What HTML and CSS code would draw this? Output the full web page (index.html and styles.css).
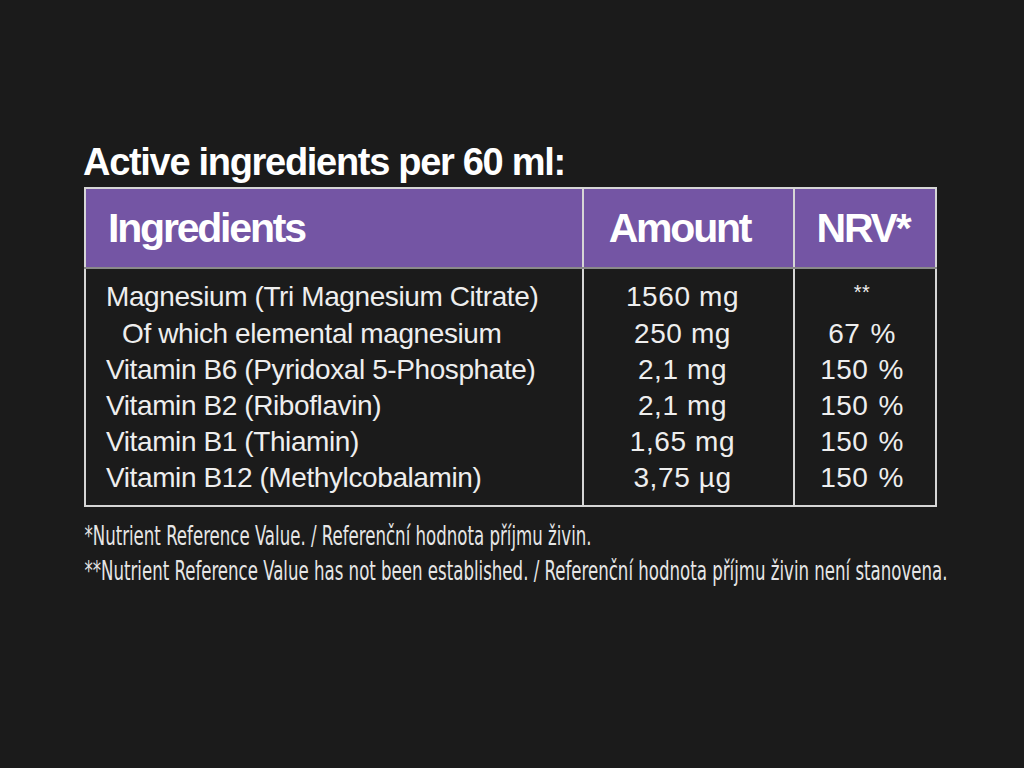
FILE: index.html
```html
<!DOCTYPE html>
<html>
<head>
<meta charset="utf-8">
<link rel="stylesheet" href="styles.css">
</head>
<body>
<main class="panel">
  <h1 class="title">Active ingredients per 60 ml:</h1>
  <table class="facts">
    <colgroup>
      <col class="c1">
      <col class="c2">
      <col class="c3">
    </colgroup>
    <thead>
      <tr>
        <th class="col-name">Ingredients</th>
        <th class="col-amount">Amount</th>
        <th class="col-nrv">NRV*</th>
      </tr>
    </thead>
    <tbody>
      <tr class="first">
        <td class="col-name">Magnesium (Tri Magnesium Citrate)</td>
        <td class="col-amount">1560 mg</td>
        <td class="col-nrv"><span class="stars">**</span></td>
      </tr>
      <tr>
        <td class="col-name sub">Of which elemental magnesium</td>
        <td class="col-amount">250 mg</td>
        <td class="col-nrv">67 %</td>
      </tr>
      <tr>
        <td class="col-name">Vitamin B6 (Pyridoxal 5-Phosphate)</td>
        <td class="col-amount">2,1 mg</td>
        <td class="col-nrv">150 %</td>
      </tr>
      <tr>
        <td class="col-name">Vitamin B2 (Riboflavin)</td>
        <td class="col-amount">2,1 mg</td>
        <td class="col-nrv">150 %</td>
      </tr>
      <tr>
        <td class="col-name">Vitamin B1 (Thiamin)</td>
        <td class="col-amount">1,65 mg</td>
        <td class="col-nrv">150 %</td>
      </tr>
      <tr class="last">
        <td class="col-name">Vitamin B12 (Methylcobalamin)</td>
        <td class="col-amount">3,75 µg</td>
        <td class="col-nrv">150 %</td>
      </tr>
    </tbody>
  </table>
  <div class="notes">
    <p>*Nutrient Reference Value. / Referenční hodnota příjmu živin.</p>
    <p>**Nutrient Reference Value has not been established. / Referenční hodnota příjmu živin není stanovena.</p>
  </div>
</main>
</body>
</html>
```
FILE: styles.css
```css
html, body {
  margin: 0;
  padding: 0;
  background: #1b1b1b;
}
body {
  width: 1024px;
  height: 768px;
  overflow: hidden;
  font-family: "Liberation Sans", Arial, sans-serif;
  color: #f2f2f2;
}
.panel {
  padding: 140px 0 0 83px;
}
.title {
  margin: 0;
  font-size: 38px;
  line-height: 44px;
  font-weight: bold;
  letter-spacing: -1.3px;
  color: #ffffff;
  height: 47px;
}
.facts {
  border-collapse: collapse;
  table-layout: fixed;
  width: 851px;
  margin-left: 1px;
  border: 2px solid #d6d6d6;
}
.c1 { width: 498px; }
.c2 { width: 211px; }
.c3 { width: 142px; }
.facts th {
  background: #7455a4;
  color: #ffffff;
  font-size: 41px;
  font-weight: bold;
  letter-spacing: -2.2px;
  height: 78px;
  padding: 0;
  border-bottom: 2px solid #8a8a8a;
  vertical-align: middle;
  white-space: nowrap;
}
.facts td {
  font-size: 28px;
  letter-spacing: -0.4px;
  line-height: 36px;
  padding: 0;
  color: #eeeeee;
  white-space: nowrap;
}
.col-name {
  text-align: left;
  padding-left: 20px !important;
  border-right: 2px solid #d6d6d6;
}
th.col-name {
  padding-left: 22px !important;
}
.col-amount {
  text-align: center;
  border-right: 2px solid #d6d6d6;
  padding-right: 12px !important;
}
th.col-amount {
  padding-right: 18px !important;
}
td.col-amount {
  letter-spacing: 0.6px !important;
}
.col-nrv {
  text-align: center;
}
td.col-nrv {
  padding-right: 6px !important;
  letter-spacing: 0.4px !important;
  word-spacing: 2px;
}
th.col-nrv {
  padding-right: 4px !important;
}
.sub {
  padding-left: 36px !important;
}
.first td {
  padding-top: 9px;
}
.last td {
  padding-bottom: 9px;
}
.stars {
  font-size: 20px;
  position: relative;
  top: -6px;
}
.notes {
  margin-top: 12px;
  padding-left: 2px;
  font-family: "Liberation Sans Narrow", "DejaVu Sans Condensed", sans-serif;
  font-size: 26px;
  color: #e6e6e6;
  transform-origin: left top;
  transform: scaleX(0.71);
}
.notes p {
  margin: 0;
  line-height: 35px;
  white-space: nowrap;
}
```
